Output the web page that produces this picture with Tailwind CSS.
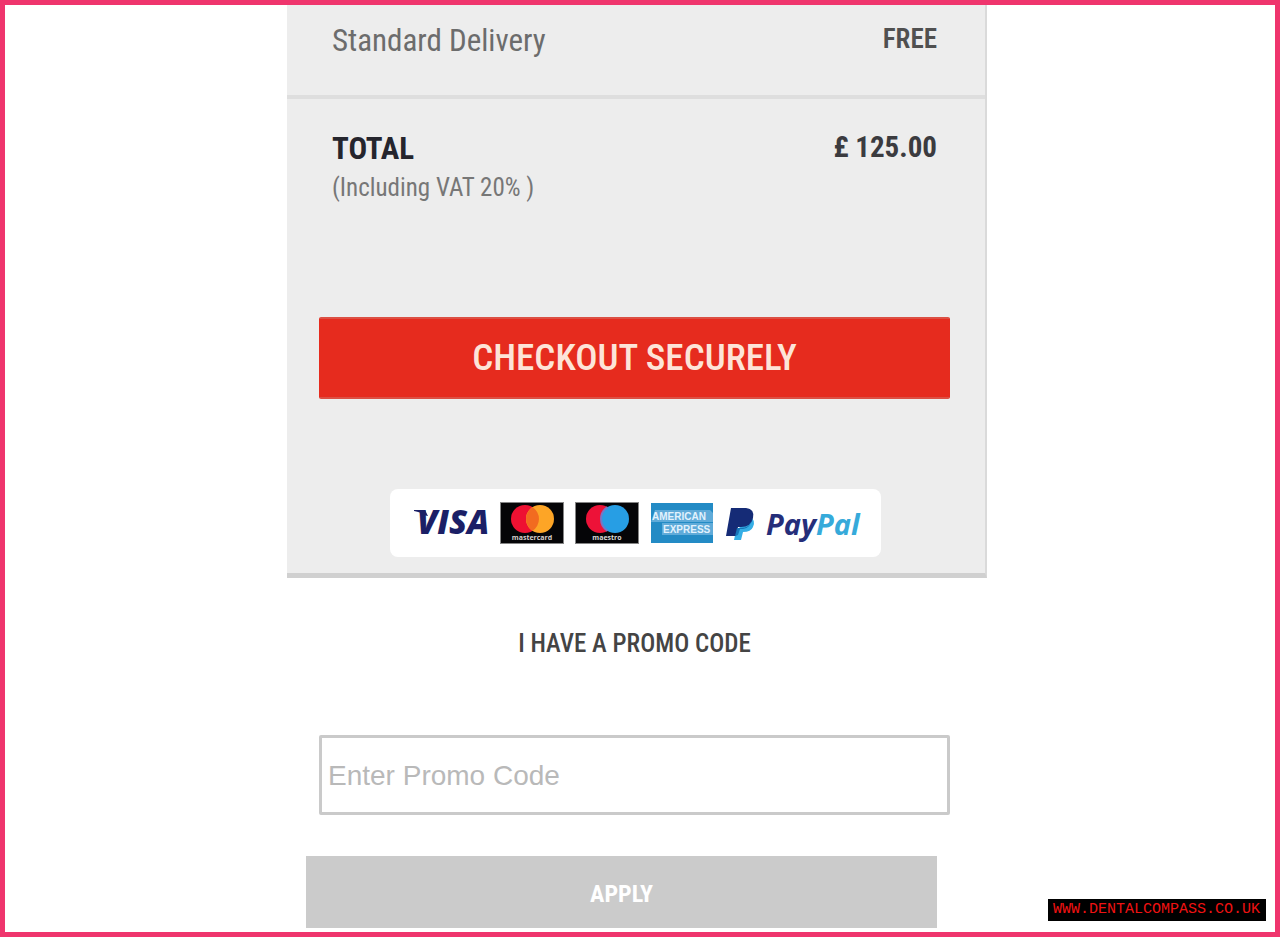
<!DOCTYPE html>
<html lang="en">
<head>
<meta charset="utf-8">
<meta name="viewport" content="width=device-width, initial-scale=1">
<title>Checkout</title>
<script src="https://cdn.jsdelivr.net/npm/@tailwindcss/browser@4"></script>
</head>
<body class="relative min-h-screen border-5 border-[#ef356d] bg-white font-['Roboto_Condensed',Roboto,sans-serif]">
<main class="mx-auto w-full max-w-[706px] pr-1.5 pb-1">
  <section class="border-r-2 border-b-5 border-b-[#d0d0d0] border-r-[#dadada] bg-[#ededed] pb-4" aria-label="Order summary">
    <div class="flex items-start justify-between border-b-4 border-[#dedede] pt-4 pr-12 pb-[34px] pl-[45px]">
      <span class="text-[31px] leading-10 text-[#6c6c6c]">Standard Delivery</span>
      <span class="text-[27px] leading-9 font-semibold text-[#505050]">FREE</span>
    </div>
    <div class="flex items-start justify-between pt-8 pr-12 pl-[45px]">
      <div>
        <h2 class="text-[31px] leading-9 font-bold text-[#25252d]">TOTAL</h2>
        <p class="text-[25px] leading-[42px] text-[#777777]">(Including VAT 20% )</p>
      </div>
      <span class="text-[29px] leading-8 font-bold text-[#3b3b3f]">£ 125.00</span>
    </div>
    <div class="pt-[108px] pr-[35px] pl-8">
      <button type="button" class="h-[82px] w-full rounded-xs border-y-2 border-[#dc5044] bg-[#e62b1e] text-[37px] leading-10 font-medium text-[#fde4d8]">CHECKOUT SECURELY</button>
    </div>
    <div class="mt-[90px] mr-[104px] ml-[103px] flex h-[68px] items-center gap-[11px] rounded-lg bg-white pl-6">
      <svg class="h-10 w-[75px] shrink-0 overflow-visible" viewBox="0 0 75 40" role="img" aria-label="Visa">
        <path d="M0 7h11l3 6-5-1Q7 9 0 8z" fill="#1b1f66"/>
        <text x="3" y="31" class="font-['Open_Sans',sans-serif] text-[33px] font-extrabold italic" fill="#1b1f66">VISA</text>
      </svg>
      <svg class="h-[42px] w-16 shrink-0" viewBox="0 0 64 42" role="img" aria-label="Mastercard">
        <path fill="#858585" d="M0 0h64v42H0z"/><path fill="#050507" d="M1 1h62v40H1z"/>
        <circle cx="25" cy="17" r="14" fill="#ee1132"/><circle cx="40" cy="17" r="14" fill="#fda526"/>
        <path fill="#f26b20" d="M32.500 5.200a14 14 0 0 1 0 23.600 14 14 0 0 1 0-23.600z"/>
        <text x="32" y="38" text-anchor="middle" class="font-['Open_Sans',sans-serif] text-[7px] font-bold" fill="#d8d0cc">mastercard</text>
      </svg>
      <svg class="h-[42px] w-16 shrink-0" viewBox="0 0 64 42" role="img" aria-label="Maestro">
        <path fill="#858585" d="M0 0h64v42H0z"/><path fill="#050507" d="M1 1h62v40H1z"/>
        <circle cx="25" cy="17" r="14" fill="#ed1238"/><circle cx="40" cy="17" r="14" fill="#279ee4"/>
        <path fill="none" stroke="#7777c5" stroke-width="2" d="M32.500 5.200a14 14 0 0 0 0 23.600"/>
        <text x="32" y="38" text-anchor="middle" class="font-['Open_Sans',sans-serif] text-[7px] font-bold" fill="#d8d8d8">maestro</text>
      </svg>
      <svg class="h-[42px] w-16 shrink-0" viewBox="0 0 64 42" role="img" aria-label="American Express">
        <path fill="#238bc5" d="M1 1h62v40H1z"/>
        <path fill="#5fabd9" d="M1 20l4-12h55l3 3v9zM12 21h51v12H12z"/>
        <text x="2" y="18" class="font-['Liberation_Sans',sans-serif] text-[10px] font-bold" fill="#e2f2fd">AMERICAN</text>
        <text x="13" y="31" class="font-['Liberation_Sans',sans-serif] text-[10px] font-bold" fill="#e2f2fd">EXPRESS</text>
      </svg>
      <svg class="h-10 w-[138px] shrink-0" viewBox="0 0 138 40" role="img" aria-label="PayPal">
        <path fill="#35aee5" d="M25 14q6 3 3 10-2 5-10 5l-2 8H9l2-9z"/>
        <path fill="#152b76" d="M6 5h15q9 1 7 10-2 9-12 9h-3l-2 9H1z"/>
        <path fill="#1775b8" d="M27 15q-1 10-12 10h-3l-2 8 3-1 2-6h3q8-1 9-11z"/>
        <text x="41" y="32" class="font-['Open_Sans',sans-serif] text-[29px] font-bold italic"><tspan fill="#252e7a">Pay</tspan><tspan fill="#36aada">Pal</tspan></text>
      </svg>
    </div>
  </section>
  <form class="flex flex-col">
    <label for="promo" class="mt-12 pr-[5px] text-center text-[25px] leading-9 font-medium text-[#444444]">I HAVE A PROMO CODE</label>
    <input id="promo" type="text" placeholder="Enter Promo Code" class="mt-[73px] mr-[37px] ml-8 h-20 rounded-xs border-3 border-[#cacaca] bg-white px-1.5 pt-0.5 font-['Liberation_Sans',sans-serif] text-[28px] placeholder:text-[#b9b9b9]">
    <button type="button" class="mt-[41px] mr-[50px] ml-[19px] h-[72px] bg-[#cbcbcb] pt-1 text-[24px] font-bold text-white">APPLY</button>
  </form>
</main>
<a href="#" class="absolute right-[9px] bottom-[11px] bg-black pr-1.5 pl-[5px] font-['Liberation_Mono',monospace] text-[15px] leading-[22px] text-[#ef1212]">WWW.DENTALCOMPASS.CO.UK</a>
</body>
</html>
